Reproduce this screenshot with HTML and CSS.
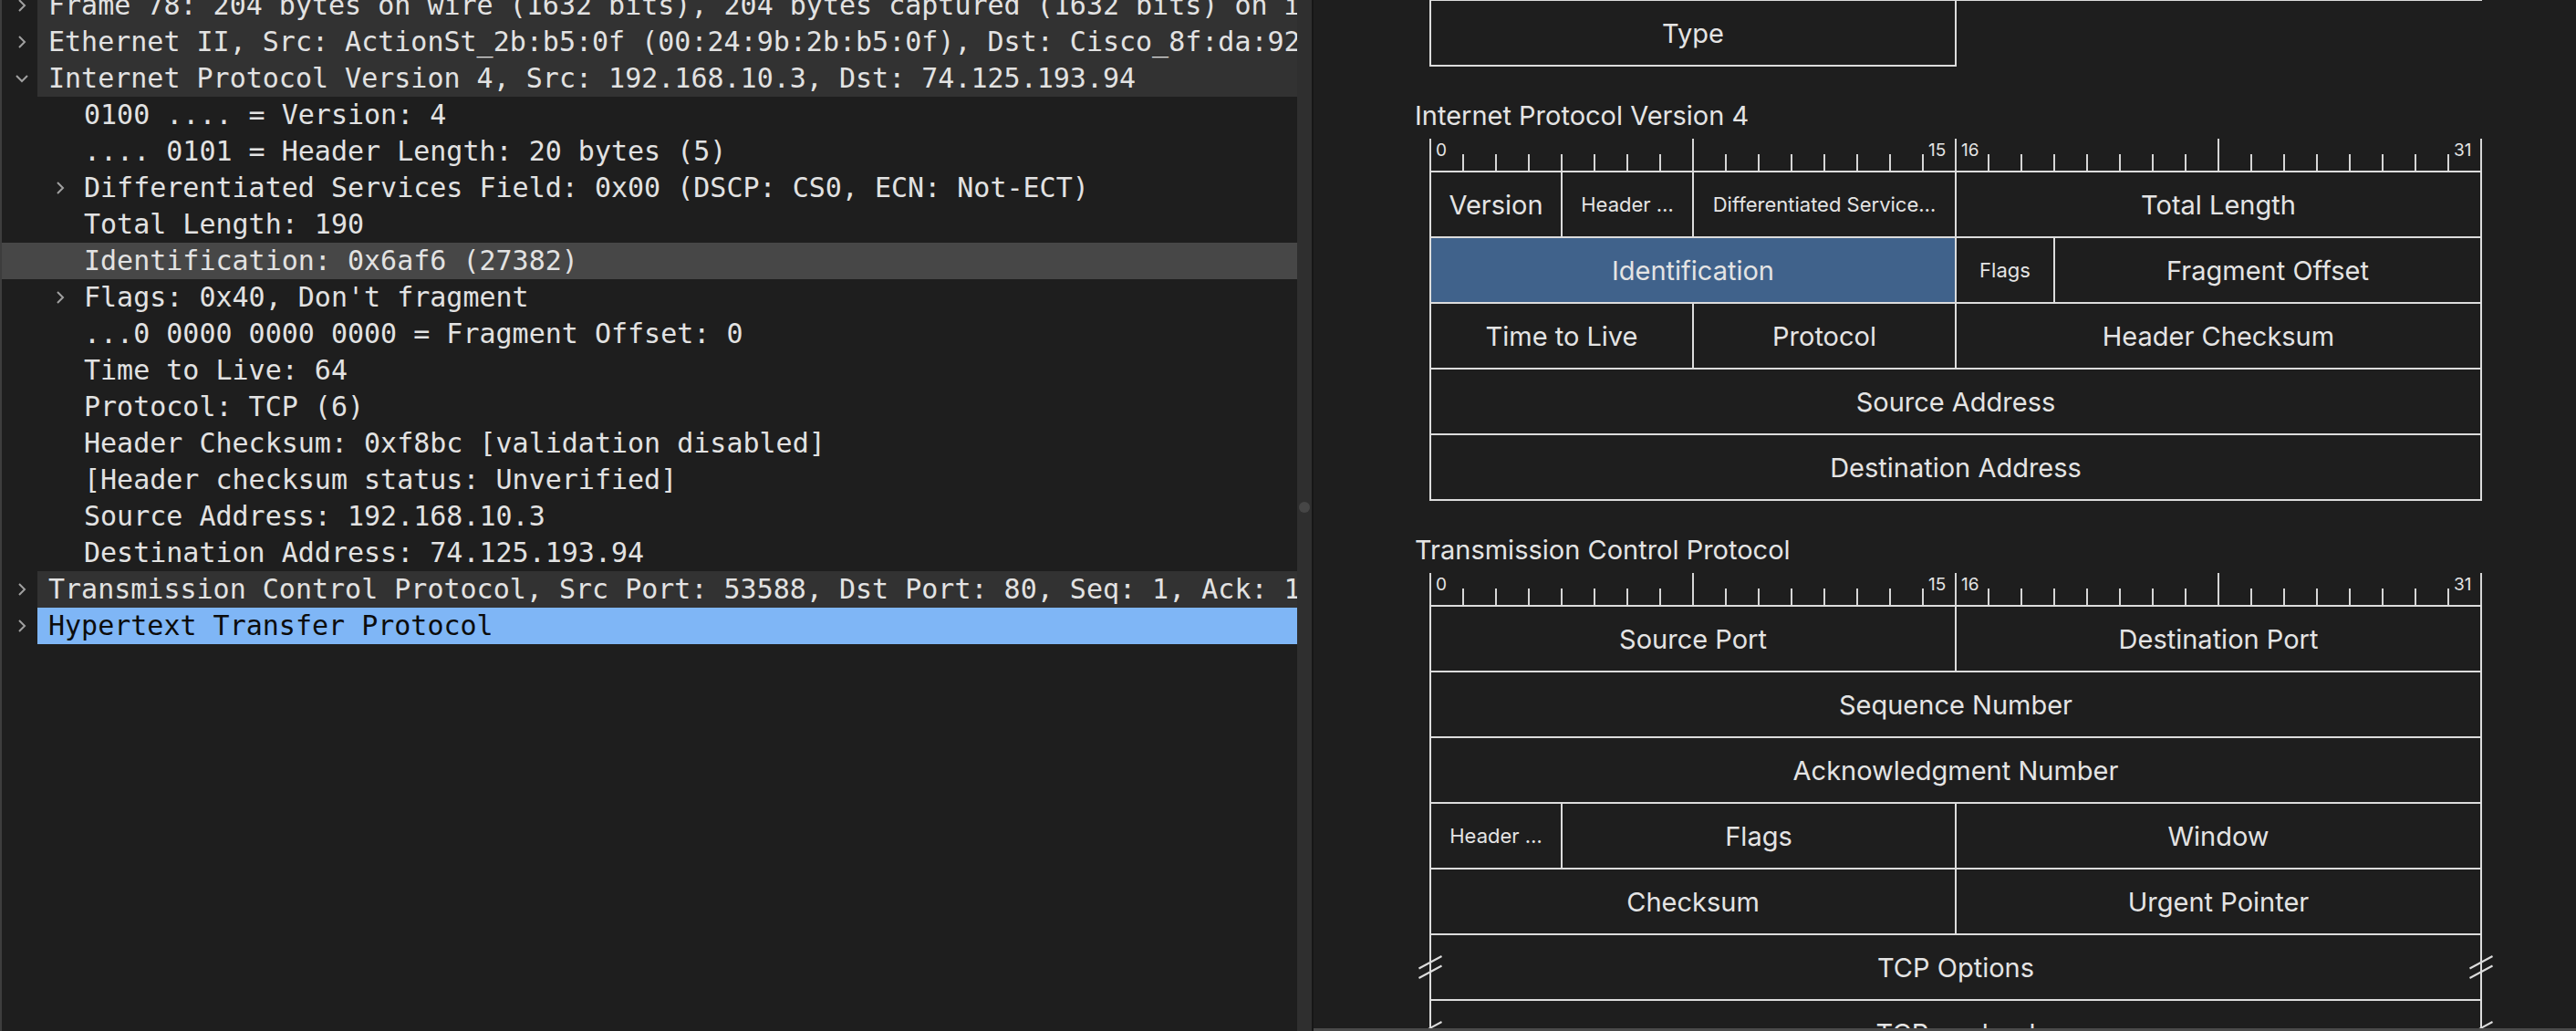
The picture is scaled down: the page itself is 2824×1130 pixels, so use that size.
FILE: index.html
```html
<!DOCTYPE html>
<html>
<head>
<meta charset="utf-8">
<title>Packet details</title>
<link rel="stylesheet" href="styles.css">
</head>
<body>
<div class="tree">
  <div class="list">
    <div class="row top"><span class="tw"><svg width="10" height="16" viewBox="0 0 10 16"><path d="M2 2l6 6-6 6" /></svg></span><span class="txt">Frame 78: 204 bytes on wire (1632 bits), 204 bytes captured (1632 bits) on interface en0, id 0</span></div>
    <div class="row top"><span class="tw"><svg width="10" height="16" viewBox="0 0 10 16"><path d="M2 2l6 6-6 6" /></svg></span><span class="txt">Ethernet II, Src: ActionSt_2b:b5:0f (00:24:9b:2b:b5:0f), Dst: Cisco_8f:da:92 (00:1f:6c:8f:da:92)</span></div>
    <div class="row top"><span class="tw"><svg width="16" height="10" viewBox="0 0 16 10"><path d="M2 2l6 6 6-6" /></svg></span><span class="txt">Internet Protocol Version 4, Src: 192.168.10.3, Dst: 74.125.193.94</span></div>
    <div class="row child"><span class="tw"></span><span class="txt">0100 .... = Version: 4</span></div>
    <div class="row child"><span class="tw"></span><span class="txt">.... 0101 = Header Length: 20 bytes (5)</span></div>
    <div class="row child"><span class="tw"><svg width="10" height="16" viewBox="0 0 10 16"><path d="M2 2l6 6-6 6" /></svg></span><span class="txt">Differentiated Services Field: 0x00 (DSCP: CS0, ECN: Not-ECT)</span></div>
    <div class="row child"><span class="tw"></span><span class="txt">Total Length: 190</span></div>
    <div class="row child sel"><span class="tw"></span><span class="txt">Identification: 0x6af6 (27382)</span></div>
    <div class="row child"><span class="tw"><svg width="10" height="16" viewBox="0 0 10 16"><path d="M2 2l6 6-6 6" /></svg></span><span class="txt">Flags: 0x40, Don't fragment</span></div>
    <div class="row child"><span class="tw"></span><span class="txt">...0 0000 0000 0000 = Fragment Offset: 0</span></div>
    <div class="row child"><span class="tw"></span><span class="txt">Time to Live: 64</span></div>
    <div class="row child"><span class="tw"></span><span class="txt">Protocol: TCP (6)</span></div>
    <div class="row child"><span class="tw"></span><span class="txt">Header Checksum: 0xf8bc [validation disabled]</span></div>
    <div class="row child"><span class="tw"></span><span class="txt">[Header checksum status: Unverified]</span></div>
    <div class="row child"><span class="tw"></span><span class="txt">Source Address: 192.168.10.3</span></div>
    <div class="row child"><span class="tw"></span><span class="txt">Destination Address: 74.125.193.94</span></div>
    <div class="row top"><span class="tw"><svg width="10" height="16" viewBox="0 0 10 16"><path d="M2 2l6 6-6 6" /></svg></span><span class="txt">Transmission Control Protocol, Src Port: 53588, Dst Port: 80, Seq: 1, Ack: 1, Len: 138</span></div>
    <div class="row top sel"><span class="tw"><svg width="10" height="16" viewBox="0 0 10 16"><path d="M2 2l6 6-6 6" /></svg></span><span class="txt">Hypertext Transfer Protocol</span></div>
  </div>
</div>
<div class="split"><span class="knob"></span></div>
<div class="diagram">
  <section class="proto eth">
    <div class="title">Ethernet II</div>
    <div class="ruler"><span class="lbl c1">0</span><span class="lbl c16">15</span><span class="lbl c17">16</span><span class="lbl c32">31</span></div>
    <div class="rows">
      <div class="f s32">Destination</div>
      <div class="f s16">Destination</div><div class="f s16">Source</div>
      <div class="f s32">Source</div>
      <div class="f s16">Type</div>
    </div>
  </section>
  <section class="proto">
    <div class="title">Internet Protocol Version 4</div>
    <div class="ruler"><span class="lbl c1">0</span><span class="lbl c16">15</span><span class="lbl c17">16</span><span class="lbl c32">31</span></div>
    <div class="rows">
      <div class="f s4">Version</div><div class="f s4 sm">Header …</div><div class="f s8 sm">Differentiated Service…</div><div class="f s16">Total Length</div>
      <div class="f s16 hl">Identification</div><div class="f s3 sm">Flags</div><div class="f s13">Fragment Offset</div>
      <div class="f s8">Time to Live</div><div class="f s8">Protocol</div><div class="f s16">Header Checksum</div>
      <div class="f s32">Source Address</div>
      <div class="f s32">Destination Address</div>
    </div>
  </section>
  <section class="proto">
    <div class="title">Transmission Control Protocol</div>
    <div class="ruler"><span class="lbl c1">0</span><span class="lbl c16">15</span><span class="lbl c17">16</span><span class="lbl c32">31</span></div>
    <div class="rows">
      <div class="f s16">Source Port</div><div class="f s16">Destination Port</div>
      <div class="f s32">Sequence Number</div>
      <div class="f s32">Acknowledgment Number</div>
      <div class="f s4 sm">Header …</div><div class="f s12">Flags</div><div class="f s16">Window</div>
      <div class="f s16">Checksum</div><div class="f s16">Urgent Pointer</div>
      <div class="f s32 brk">TCP Options<svg class="mk l" width="28" height="28" viewBox="0 0 28 28"><path d="M1.5 15.5L26.5 2M1.5 26L26.5 12.5"/></svg><svg class="mk r" width="28" height="28" viewBox="0 0 28 28"><path d="M1.5 15.5L26.5 2M1.5 26L26.5 12.5"/></svg></div>
      <div class="f s32 brk">TCP payload<svg class="mk l" width="28" height="28" viewBox="0 0 28 28"><path d="M1.5 15.5L26.5 2M1.5 26L26.5 12.5"/></svg><svg class="mk r" width="28" height="28" viewBox="0 0 28 28"><path d="M1.5 15.5L26.5 2M1.5 26L26.5 12.5"/></svg></div>
    </div>
  </section>
</div>
</body>
</html>
```
FILE: styles.css
```css
* { box-sizing: border-box; }
html, body { margin: 0; padding: 0; }
body {
  width: 2824px;
  height: 1130px;
  overflow: hidden;
  background: #1e1e1e;
  display: flex;
}

/* ---------- packet tree ---------- */
.tree {
  flex: none;
  width: 1422px;
  height: 1130px;
  overflow: hidden;
  border-left: 2px solid #3d3d3d;
  font-family: "DejaVu Sans Mono", monospace;
  font-size: 30px;
  color: #e2e2e2;
}
.list { margin-top: -14px; }
.row {
  display: flex;
  height: 40px;
  line-height: 40px;
  white-space: pre;
}
.tw {
  flex: none;
  width: 16px;
  height: 40px;
  display: flex;
  align-items: center;
  justify-content: center;
}
.tw svg { display: block; }
.tw path { fill: none; stroke: #a0a0a0; stroke-width: 2; }
.txt { flex: 1; min-width: 0; overflow: hidden; }
.top .tw { margin-left: 14px; margin-right: 9px; }
.top .txt { background: #323232; padding-left: 12px; }
.top.sel .txt { background: #7fb6f6; color: #0c0c0c; }
.child { padding-left: 56px; }
.child .tw { margin-right: 18px; }
.child.sel { background: #474747; }

/* ---------- splitter ---------- */
.split {
  flex: none;
  width: 18px;
  height: 1130px;
  background: #2f2f2f;
  border-right: 2px solid #161616;
  display: flex;
  align-items: center;
  justify-content: center;
}
.knob {
  width: 12px;
  height: 12px;
  border-radius: 50%;
  background: #464646;
  margin-bottom: 18px;
}

/* ---------- packet diagram ---------- */
.diagram {
  flex: 1;
  height: 1130px;
  overflow: hidden;
  padding-left: 111px;
  border-bottom: 3px solid #4a4a4a;
  font-family: Inter, "Liberation Sans", sans-serif;
  color: #e4e4e4;
}
.proto { padding-top: 38px; }
.proto.eth { margin-top: -332px; }
.title {
  height: 34px;
  line-height: 34px;
  font-size: 29px;
  margin-bottom: 8px;
  white-space: nowrap;
}
.ruler {
  display: grid;
  grid-template-columns: repeat(32, 36px);
  height: 36px;
  width: 1154px;
  margin-left: 16px;
  background-image:
    linear-gradient(to right, #d6d6d6 2px, transparent 2px),
    linear-gradient(to right, #d6d6d6 2px, transparent 2px);
  background-size: 288px 36px, 36px 19px;
  background-position: 0 0, 0 100%;
  background-repeat: repeat-x, repeat-x;
}
.lbl {
  font-size: 19px;
  line-height: 22px;
  padding: 2px 0 0 7px;
  white-space: nowrap;
}
.c1 { grid-column: 1; }
.c16 { grid-column: 16; }
.c17 { grid-column: 17; }
.c32 { grid-column: 32; }

.rows {
  display: grid;
  grid-template-columns: repeat(32, 36px);
  grid-auto-rows: 72px;
  width: 1152px;
  margin-left: 17px;
}
.f {
  display: flex;
  align-items: center;
  justify-content: center;
  font-size: 29px;
  white-space: nowrap;
  overflow: hidden;
  box-shadow: 0 0 0 1px #dcdcdc, inset 0 0 0 1px #dcdcdc;
}
.f.sm { font-size: 22px; }
.f.hl { background: #40628b; }
.s3 { grid-column: span 3; }
.s4 { grid-column: span 4; }
.s8 { grid-column: span 8; }
.s12 { grid-column: span 12; }
.s13 { grid-column: span 13; }
.s16 { grid-column: span 16; }
.s32 { grid-column: span 32; }

.brk { position: relative; overflow: visible; }
.mk {
  position: absolute;
  top: 22px;
}
.mk.l { left: -14px; }
.mk.r { right: -14px; }
.mk path { fill: none; stroke: #dcdcdc; stroke-width: 2; }
```
